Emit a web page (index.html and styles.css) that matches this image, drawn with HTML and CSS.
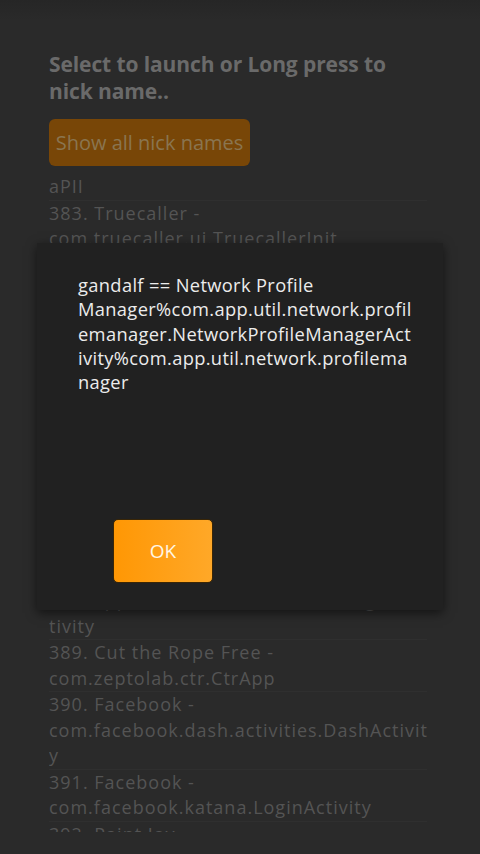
FILE: index.html
```html
<!DOCTYPE html>
<html lang="en">
<head>
    <meta charset="UTF-8">
    <meta name="viewport" content="width=device-width, initial-scale=1.0">
    <title>Nick names</title>
    <link rel="stylesheet" href="styles.css">
</head>
<body>
    <div class="screen">
        <h1 class="title">Select to launch or Long press to<br>nick name..</h1>

        <button class="nick-button">Show all nick names</button>

        <div class="app-list">
            <ul class="rows">
                <li>382. Paytm -<br>net.one97.paytm.landingpage.Landing<br>aPII</li>
                <li>383. Truecaller -<br>com.truecaller.ui.TruecallerInit</li>
                <li>384. Google Play Music -<br>com.android.music.activitymanagemen<br>t.TopLevelActivity</li>
                <li>385. Google Play Movies &amp; TV -<br>com.google.android.videos.activity.Lau<br>ncherActivity</li>
                <li>386. Google Play Books -<br>com.google.android.apps.books.app.Bo<br>oksActivity</li>
                <li>387. Google Play Newsstand -<br>com.google.apps.dots.android.app.act<br>ivity.CurrentsStartActivity</li>
                <li>388. Network Profile Manager -<br>com.app.util.network.ProfileManagerAc<br>tivity</li>
                <li>389. Cut the Rope Free -<br>com.zeptolab.ctr.CtrApp</li>
                <li>390. Facebook -<br>com.facebook.dash.activities.DashActivit<br>y</li>
                <li>391. Facebook -<br>com.facebook.katana.LoginActivity</li>
                <li>392. Paint Joy -<br>com.joy.paint.MainActivity</li>
            </ul>
        </div>
    </div>

    <div class="dialog">
        <p class="dialog-text">gandalf == Network Profile<br>Manager%com.app.util.network.profil<br>emanager.NetworkProfileManagerAct<br>ivity%com.app.util.network.profilema<br>nager</p>
        <button class="ok-button">OK</button>
    </div>
</body>
</html>
```

FILE: styles.css
```css
html, body {
    margin: 0;
    padding: 0;
}
body {
    width: 480px;
    height: 854px;
    overflow: hidden;
    position: relative;
    background: linear-gradient(#262626 0, #2a2a2a 20px, #2a2a2a 100%);
    font-family: "Open Sans", "Noto Sans", sans-serif;
}
.screen {
    padding: 51px 49px 0 49px;
}
.title {
    margin: 0;
    font-size: 21px;
    line-height: 27px;
    font-weight: 700;
    letter-spacing: -0.1px;
    color: #6a6a6a;
}
.nick-button {
    display: block;
    margin-top: 14px;
    height: 47px;
    width: 201px;
    padding: 0;
    border: none;
    border-radius: 6px;
    background-color: #784607;
    color: #8a7550;
    font-family: inherit;
    font-size: 20px;
}
.app-list {
    margin-top: 14px;
    height: 652px;
    overflow: hidden;
}
.rows {
    list-style: none;
    margin: -57px 0 0 0;
    padding: 0;
    width: 378px;
}
.rows li {
    font-size: 18px;
    line-height: 25.5px;
    letter-spacing: 1px;
    color: #545454;
    border-bottom: 1px solid #2f2f2f;
    white-space: nowrap;
}
.dialog {
    position: absolute;
    left: 37px;
    top: 243px;
    width: 406px;
    height: 367px;
    box-sizing: border-box;
    padding: 30px 0 0 41px;
    background: #212121;
    box-shadow: 0 3px 10px rgba(0,0,0,0.55);
}
.dialog-text {
    margin: 0;
    font-size: 18.3px;
    line-height: 24.3px;
    letter-spacing: 0.35px;
    color: #ececec;
    white-space: nowrap;
}
.ok-button {
    display: block;
    margin: 125px 0 0 35px;
    width: 100px;
    height: 64px;
    padding: 0;
    border: 1px solid #3a2606;
    border-radius: 5px;
    background: linear-gradient(90deg, #ff9704, #ffa828);
    color: #fff6e6;
    font-family: inherit;
    font-size: 19px;
}
```
